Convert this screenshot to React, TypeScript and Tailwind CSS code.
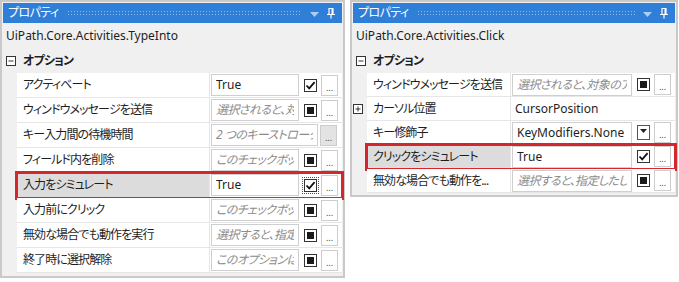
import React from "react";

type Check = "checked" | "mixed" | "focus";

type Row = {
  label: string;
  value?: string;
  placeholder?: boolean;
  kind?: "box" | "plain" | "dropdown" | "wide";
  check?: Check;
  expander?: boolean;
  selected?: boolean;
};

const font = "font-['Noto_Sans','Noto_Sans_CJK_JP',sans-serif] [font-feature-settings:'palt']";

// placeholders are cut by the box in the original, keep only the visible part
const leftRows: Row[] = [
  { label: "アクティベート", value: "True", check: "checked" },
  { label: "ウィンドウメッセージを送信", value: "選択されると、対", placeholder: true, check: "mixed" },
  { label: "キー入力間の待機時間", value: "2 つのキーストローク間", placeholder: true, kind: "wide" },
  { label: "フィールド内を削除", value: "このチェックボック", placeholder: true, check: "mixed" },
  { label: "入力をシミュレート", value: "True", check: "focus", selected: true },
  { label: "入力前にクリック", value: "このチェックボック", placeholder: true, check: "mixed" },
  { label: "無効な場合でも動作を実行", value: "選択すると、指定", placeholder: true, check: "mixed" },
  { label: "終了時に選択解除", value: "このオプションは、", placeholder: true, check: "mixed" },
];

const rightRows: Row[] = [
  { label: "ウィンドウメッセージを送信", value: "選択されると、対象のア", placeholder: true, check: "mixed" },
  { label: "カーソル位置", value: "CursorPosition", kind: "plain", expander: true },
  { label: "キー修飾子", value: "KeyModifiers.None", kind: "dropdown" },
  { label: "クリックをシミュレート", value: "True", check: "checked", selected: true },
  { label: "無効な場合でも動作を...", value: "選択すると、指定したし", placeholder: true, check: "mixed" },
];

const CheckBox = ({ state }: { state: Check }) => (
  <div
    className={
      "w-[13px] h-[13px] shrink-0 border border-[#333] bg-white flex items-center justify-center " +
      (state === "focus" ? "outline outline-1 outline-dotted outline-[#555] outline-offset-1" : "")
    }
  >
    {state === "mixed" ? (
      <div className="w-[7px] h-[7px] bg-[#1a1a1a]" />
    ) : (
      <svg width="11" height="11" viewBox="0 0 11 11">
        <path d="M1.5 5.5 L4.2 8.3 L9.6 2.2" fill="none" stroke="#111" strokeWidth="1.8" />
      </svg>
    )}
  </div>
);

const Ellipsis = ({ gray }: { gray?: boolean }) => (
  <div
    className={
      "w-[17px] h-[21px] shrink-0 border border-[#cdcdcd] flex items-end justify-center pb-[3px] text-[9px] leading-none text-[#444] " +
      (gray ? "bg-[#e3e3e3]" : "bg-white")
    }
  >
    ...
  </div>
);

const Expander = ({ plus }: { plus?: boolean }) => (
  <svg width="10" height="10" viewBox="0 0 10 10">
    <rect x="0.5" y="0.5" width="9" height="9" fill="white" stroke="#333" />
    <path d="M2.5 5 H7.5" stroke="#333" />
    {plus && <path d="M5 2.5 V7.5" stroke="#333" />}
  </svg>
);

const PropRow = ({ row, labelW, boxW }: { row: Row; labelW: number; boxW: number }) => {
  const kind = row.kind ?? "box";
  const valueText = (
    <span
      className={
        "block w-full whitespace-nowrap overflow-hidden " +
        (row.placeholder ? "italic text-[#8c8c8c] tracking-[-0.6px]" : "text-[#1e1e1e]")
      }
    >
      {row.value}
    </span>
  );
  return (
    <div className="flex h-full">
      <div className="w-[14px] shrink-0 flex items-center justify-start">
        {row.expander && <Expander plus />}
      </div>
      <div
        className={
          "flex flex-1 border-b border-[#e6e6e6] " +
          (row.selected ? "outline outline-[3px] outline-[#d3262d] -outline-offset-1" : "")
        }
      >
        <div
          style={{ width: labelW }}
          className={
            "shrink-0 flex items-center pl-[6px] border-r border-[#e6e6e6] text-[12px] tracking-[-0.9px] text-[#1e1e1e] whitespace-nowrap overflow-hidden " +
            (row.selected ? "bg-[#dcdcdc]" : "bg-white")
          }
        >
          {row.label}
        </div>
        <div className="flex-1 bg-white flex items-center pl-px pr-[3px] text-[12px]">
          {kind === "plain" ? (
            <div className="pl-[3px]">{valueText}</div>
          ) : (
            <>
              <div
                style={{ width: kind === "wide" ? boxW + 19 : boxW }}
                className="h-[22px] shrink-0 border border-[#cfcfcf] flex items-center px-[4px] overflow-hidden"
              >
                {valueText}
              </div>
              {kind === "wide" ? (
                <div className="ml-[2px]">
                  <Ellipsis gray />
                </div>
              ) : (
                <div className="flex items-center ml-[5px] gap-[4px]">
                  {kind === "dropdown" ? (
                    <div className="w-[13px] h-[15px] shrink-0 border border-[#555] bg-white flex items-start justify-center pt-[3px]">
                      <svg width="7" height="4" viewBox="0 0 7 4">
                        <path d="M0 0 H7 L3.5 4 Z" fill="#222" />
                      </svg>
                    </div>
                  ) : (
                    <CheckBox state={row.check ?? "mixed"} />
                  )}
                  <Ellipsis />
                </div>
              )}
            </>
          )}
        </div>
      </div>
    </div>
  );
};

const Panel = ({
  title,
  rows,
  width,
  height,
  labelW,
  boxW,
  rowH,
}: {
  title: string;
  rows: Row[];
  width: number;
  height: number;
  labelW: number;
  boxW: number;
  rowH: number;
}) => (
  <div
    style={{ width, height }}
    className="shrink-0 border-2 border-[#c9c9c9] bg-[#f0f0f0] p-px flex flex-col"
  >
    <div className="h-[20px] bg-[#2f7fd9] flex items-center pl-[5px] pr-[6px] text-white text-[12px]">
      <span className="tracking-[-0.6px]">プロパティ</span>
      <div className="flex-1 mx-[8px] h-[6px] bg-[radial-gradient(circle,#8fbaea_0.8px,transparent_1px)] bg-[length:3px_3px]" />
      <svg width="9" height="6" viewBox="0 0 9 6" className="mt-[4px]">
        <path d="M0 0 H9 L4.5 5 Z" fill="#a9cdf5" />
      </svg>
      <svg width="10" height="12" viewBox="0 0 10 12" className="ml-[7px]">
        <path d="M2.5 1.5 H7.5 M3 1.5 V7 M7 1.5 V7 M1 7.5 H9 M5 7.5 V11.5" stroke="white" strokeWidth="1.2" fill="none" />
        <rect x="5.5" y="1.5" width="1.5" height="5.5" fill="white" />
      </svg>
    </div>
    <div className="h-[26px] flex items-center pl-[3px] text-[12px] text-[#1e1e1e]">{title}</div>
    <div className="h-[24px] flex items-center pl-[3px] gap-[7px]">
      <Expander />
      <span className="text-[12px] font-bold tracking-[-0.8px] text-[#1e1e1e]">オプション</span>
    </div>
    <div className="flex flex-col">
      {rows.map((r) => (
        <div key={r.label} style={{ height: rowH }}>
          <PropRow row={r} labelW={labelW} boxW={boxW} />
        </div>
      ))}
    </div>
  </div>
);

export default function App() {
  return (
    <div className={"w-[679px] h-[282px] bg-white flex items-start " + font}>
      <Panel
        title="UiPath.Core.Activities.TypeInto"
        rows={leftRows}
        width={345}
        height={278}
        labelW={193}
        boxW={88}
        rowH={25}
      />
      <div className="w-[5px] shrink-0" />
      <Panel
        title="UiPath.Core.Activities.Click"
        rows={rightRows}
        width={328}
        height={197}
        labelW={144}
        boxW={120}
        rowH={24}
      />
    </div>
  );
}
